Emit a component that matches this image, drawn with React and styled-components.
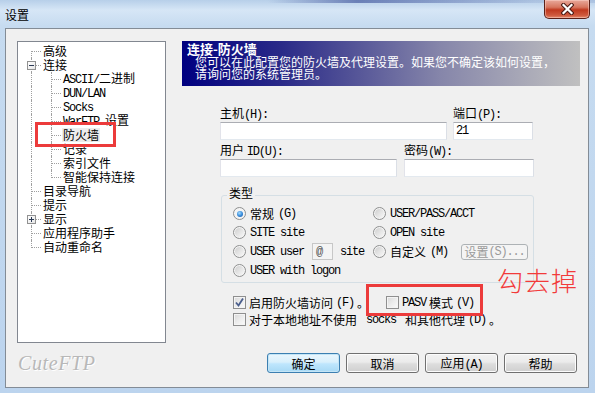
import React from "react";
import styled, { createGlobalStyle, css } from "styled-components";

const Global = createGlobalStyle`
  html, body { margin: 0; padding: 0; }
  body {
    width: 595px; height: 393px; overflow: hidden;
    font-family: "Noto Sans CJK SC", "Liberation Sans", sans-serif;
    font-size: 12px; color: #000;
  }
  * { box-sizing: border-box; }
`;

const L = styled.span`
  font-family: "Liberation Mono", "DejaVu Sans Mono", monospace;
  font-size: 12px;
  letter-spacing: -1.2px;
`;

const Win = styled.div`
  position: relative;
  width: 595px; height: 393px;
  display: flex; flex-direction: column;
  overflow: hidden;
  background:
    linear-gradient(90deg, rgba(40,60,140,0) 45%, rgba(40,60,140,0.55) 60%, rgba(40,60,140,0.1) 90%) top / 100% 3px no-repeat,
    linear-gradient(180deg, #b7cfe9 0px, #d6e6f6 10px, #c6dbf0 26px, #bcd4ee 100%);
`;

const TitleBar = styled.div`
  height: 28px; flex: none;
  display: flex; align-items: flex-start; justify-content: space-between;
`;

const Title = styled.div`
  padding: 7px 0 0 5px;
  font-size: 12px; line-height: 15px; color: #000;
`;

const CloseBtn = styled.div`
  width: 46px; height: 19px; margin-right: 5px;
  border: 1px solid #5a2018; border-top: none;
  border-radius: 0 0 5px 5px;
  background: linear-gradient(180deg, #e9a99b 0%, #d7765f 40%, #c0391f 55%, #cf5a3e 85%, #e58a6e 100%);
  box-shadow: inset 0 0 0 1px rgba(255,220,210,0.45);
  display: grid; place-items: center;
`;

const Client = styled.div`
  height: 360px; flex: none;
  margin: 0 6px 0 5px;
  border: 1px solid #838c96;
  background: #f0f0f0;
  padding: 12px 11px 0 11px;
  display: flex; flex-direction: column;
`;

const Main = styled.div`
  display: grid;
  grid-template-columns: 149px 398px;
  column-gap: 16px;
  height: 302px;
`;

const Tree = styled.div`
  border: 1px solid #828790;
  background: #fff;
  padding: 2px 0 0 3px;
`;

const Row = styled.div`
  height: 14px; display: flex; align-items: center;
  white-space: nowrap; line-height: 14px;
`;

const dot = "1px dotted #a0a0a0";
const Guide = styled.span`
  position: relative; flex: none;
  width: 20px; height: 14px;
  &::before {
    content: "";
    position: absolute; left: 10px;
    top: ${p => (p.$k === "first" ? "7px" : "0")};
    height: ${p => (p.$k === "first" ? "7px" : p.$k === "last" ? "8px" : p.$k === "blank" ? "0" : "14px")};
    border-left: ${p => (p.$k === "blank" ? "none" : dot)};
  }
  &::after {
    content: "";
    position: absolute; left: 11px; top: 7px; width: 9px;
    border-top: ${p => (p.$k === "pipe" || p.$k === "blank" ? "none" : dot)};
  }
`;

const Expander = styled.span`
  position: absolute; left: 6px; top: 3px; z-index: 1;
  width: 9px; height: 9px;
  border: 1px solid #919191;
  background: linear-gradient(135deg, #fff, #e6e6e6);
  display: grid; place-items: center;
`;

const Item = styled.span`
  margin-left: 1px; padding: 0 1px;
  background: ${p => (p.$sel ? "#ececec" : "transparent")};
`;

const Right = styled.div`
  display: flex; flex-direction: column;
`;

const Header = styled.div`
  height: 45px;
  background: linear-gradient(90deg, #000080 0%, #2a2a88 25%, #8686aa 65%, #c0c0c0 100%);
  color: #fff;
  padding: 0 5px;
`;

const HeadTitle = styled.div`
  font-size: 13px; font-weight: 700; line-height: 15px;
`;

const HeadDesc = styled.div`
  padding-left: 8px; line-height: 12px; font-size: 12px;
`;

const Form = styled.div`
  padding-left: 38px;
  display: flex; flex-direction: column;
`;

const FieldRow = styled.div`
  display: flex; gap: ${p => p.$gap}px;
  margin-top: ${p => p.$mt}px;
`;

const Field = styled.label`
  display: flex; flex-direction: column;
  width: ${p => p.$w}px;
  line-height: 14px;
`;

const Input = styled.input`
  height: 18px; width: 100%;
  border: 1px solid;
  border-color: #abadb3 #dbdfe6 #e3e9ef #e2e3ea;
  background: #fff;
  padding: 0 2px;
  font-family: "Liberation Mono", monospace; font-size: 12px; letter-spacing: -1.2px;
  outline: none;
`;

const Group = styled.fieldset`
  margin: 9px 0 0 1px;
  width: 313px;
  border: 1px solid #d5dfe5;
  border-radius: 3px;
  padding: 0 0 2px 11px;
`;

const Legend = styled.legend`
  margin-left: -6px;
  padding: 0 2px 4px;
  line-height: 14px; font-size: 12px;
`;

const RadioGrid = styled.div`
  display: grid;
  grid-template-columns: 140px 1fr;
  grid-auto-rows: 19px;
`;

const Opt = styled.label`
  display: flex; align-items: center; gap: 4px;
  white-space: nowrap; line-height: 14px;
`;

const Radio = styled.span`
  width: 13px; height: 13px; flex: none;
  border-radius: 50%;
  border: 1px solid #8e8f8f;
  background: #f4f4f4;
  display: grid; place-items: center;
  &::after {
    content: "";
    width: ${p => (p.$on ? "6px" : "9px")};
    height: ${p => (p.$on ? "6px" : "9px")};
    border-radius: 50%;
    background: ${p =>
      p.$on
        ? "radial-gradient(circle at 40% 35%, #a6dcff 0%, #3c8fdc 50%, #0e4fa3 100%)"
        : "linear-gradient(135deg, #cfcfcf 0%, #e4e4e4 50%, #f7f7f7 100%)"};
  }
`;

const SmallBox = styled.span`
  display: inline-flex; align-items: center;
  width: 21px; height: 17px;
  margin: 0 3px 0 4px;
  border: 1px solid #c7c7c7;
  background: #f4f4f4;
  padding-left: 3px;
  color: #555;
`;

const DisabledBtn = styled.span`
  display: inline-flex; align-items: center; justify-content: center;
  width: 67px; height: 16px; margin-left: 9px;
  border: 1px solid #adb2b5; border-radius: 3px;
  background: #f4f4f4;
  color: #9a9a9a;
`;

const Checks = styled.div`
  margin-top: 11px;
  padding-left: 13px;
  display: grid;
  grid-template-columns: 153px 1fr;
  grid-auto-rows: 17px;
`;

const CheckOpt = styled.label`
  display: flex; align-items: center; gap: 3px;
  white-space: nowrap; line-height: 14px;
  grid-column: ${p => (p.$span ? "1 / span 2" : "auto")};
`;

const Box = styled.span`
  width: 13px; height: 13px; flex: none;
  border: 1px solid #8f8f8f;
  background: linear-gradient(135deg, #d8d8d8 0%, #ececec 50%, #fbfbfb 100%);
  box-shadow: inset 0 0 0 1px #f4f4f4;
  display: grid; place-items: center;
`;

const Footer = styled.div`
  display: flex; align-items: center;
  margin-top: 10px;
`;

const Brand = styled.div`
  padding-left: 1px;
  font-family: "Liberation Serif", serif;
  font-style: italic;
  font-size: 20px; letter-spacing: 0.6px;
  color: #b8b8b8;
  text-shadow: 1px 1px 0 #fff;
  line-height: 20px;
`;

const Buttons = styled.div`
  margin-left: auto;
  display: flex; gap: 6px;
`;

const Btn = styled.button`
  width: 73px; height: 20px; padding: 0;
  border-radius: 3px;
  font-family: "Noto Sans CJK SC", sans-serif; font-size: 12px; color: #000;
  ${p =>
    p.$focus
      ? css`
          border: 1px solid #3c7fb1;
          background: linear-gradient(180deg, #eaf6fd 0%, #d9f0fc 45%, #bee6fd 55%, #a7d9f5 100%);
          box-shadow: inset 0 0 0 1px #c4e5f6;
        `
      : css`
          border: 1px solid #707070;
          background: linear-gradient(180deg, #f2f2f2 0%, #ebebeb 45%, #dddddd 55%, #cfcfcf 100%);
          box-shadow: inset 0 0 0 1px #fcfcfc;
        `}
`;

const Mark = styled.div`
  position: absolute;
  left: ${p => p.$x}px; top: ${p => p.$y}px;
  width: ${p => p.$w}px; height: ${p => p.$h}px;
  border: 3px solid #ec3b3b;
  pointer-events: none;
`;

const Note = styled.div`
  position: absolute; left: 497px; top: 264px;
  font-family: "Noto Sans CJK SC", sans-serif;
  font-weight: 300;
  font-size: 26px; line-height: 32px;
  color: #f23a3a;
  letter-spacing: 1px;
`;

const Minus = () => (
  <svg width="7" height="7" viewBox="0 0 7 7"><rect x="1" y="3" width="5" height="1" fill="#2b3a55" /></svg>
);
const Plus = () => (
  <svg width="7" height="7" viewBox="0 0 7 7">
    <rect x="1" y="3" width="5" height="1" fill="#2b3a55" />
    <rect x="3" y="1" width="1" height="5" fill="#2b3a55" />
  </svg>
);

const Check = () => (
  <svg width="11" height="11" viewBox="0 0 11 11">
    <path d="M2 5.5 L4.5 8.5 L9 1.5" fill="none" stroke="#4a5e8c" strokeWidth="1.8" />
  </svg>
);

const tree = [
  { g: ["first"], t: "高级" },
  { g: ["tee"], t: "连接", exp: "minus" },
  { g: ["pipe", "tee"], t: <><L>ASCII/</L>二进制</> },
  { g: ["pipe", "tee"], t: <L>DUN/LAN</L> },
  { g: ["pipe", "tee"], t: <L>Socks</L> },
  { g: ["pipe", "tee"], t: <><L>WarFTP </L>设置</> },
  { g: ["pipe", "tee"], t: "防火墙", sel: true },
  { g: ["pipe", "tee"], t: "记录" },
  { g: ["pipe", "tee"], t: "索引文件" },
  { g: ["pipe", "last"], t: "智能保持连接" },
  { g: ["tee"], t: "目录导航" },
  { g: ["tee"], t: "提示" },
  { g: ["tee"], t: "显示", exp: "plus" },
  { g: ["tee"], t: "应用程序助手" },
  { g: ["last"], t: "自动重命名" },
];

export default function App() {
  return (
    <>
      <Global />
      <Win>
        <TitleBar>
          <Title>设置</Title>
          <CloseBtn>
            <svg width="13" height="12" viewBox="0 0 13 12">
              <path d="M2.5 2 L10.5 10 M10.5 2 L2.5 10" stroke="#4a1a14" strokeWidth="4.2" strokeLinecap="square" />
              <path d="M2.5 2 L10.5 10 M10.5 2 L2.5 10" stroke="#fff" strokeWidth="2.2" strokeLinecap="square" />
            </svg>
          </CloseBtn>
        </TitleBar>
        <Client>
          <Main>
            <Tree>
              {tree.map((r, i) => (
                <Row key={i}>
                  {r.g.map((k, j) => (
                    <Guide key={j} $k={k}>
                      {j === 0 && r.exp && <Expander>{r.exp === "minus" ? <Minus /> : <Plus />}</Expander>}
                    </Guide>
                  ))}
                  <Item $sel={r.sel}>{r.t}</Item>
                </Row>
              ))}
            </Tree>
            <Right>
              <Header>
                <HeadTitle>连接-防火墙</HeadTitle>
                <HeadDesc>
                  您可以在此配置您的防火墙及代理设置。如果您不确定该如何设置，
                  <br />
                  请询问您的系统管理员。
                </HeadDesc>
              </Header>
              <Form>
                <FieldRow $gap={6} $mt={20}>
                  <Field $w={227}>
                    <span>主机<L>(H):</L></span>
                    <Input defaultValue="" />
                  </Field>
                  <Field $w={80}>
                    <span>端口<L>(P):</L></span>
                    <Input defaultValue="21" />
                  </Field>
                </FieldRow>
                <FieldRow $gap={7} $mt={3}>
                  <Field $w={177}>
                    <span>用户 <L>ID(U):</L></span>
                    <Input defaultValue="" />
                  </Field>
                  <Field $w={130}>
                    <span>密码<L>(W):</L></span>
                    <Input type="text" defaultValue="" />
                  </Field>
                </FieldRow>
                <Group>
                  <Legend>类型</Legend>
                  <RadioGrid>
                    <Opt><Radio $on />常规<L>(G)</L></Opt>
                    <Opt><Radio /><L>USER/PASS/ACCT</L></Opt>
                    <Opt><Radio /><L>SITE site</L></Opt>
                    <Opt><Radio /><L>OPEN site</L></Opt>
                    <Opt><Radio /><L>USER user</L><SmallBox><L>@</L></SmallBox><L>site</L></Opt>
                    <Opt><Radio />自定义<L>(M)</L><DisabledBtn>设置<L>(S)...</L></DisabledBtn></Opt>
                    <Opt><Radio /><L>USER with logon</L></Opt>
                  </RadioGrid>
                </Group>
                <Checks>
                  <CheckOpt><Box><Check /></Box>启用防火墙访问<L>(F)</L>。</CheckOpt>
                  <CheckOpt><Box /><L>PASV </L>模式<L>(V)</L></CheckOpt>
                  <CheckOpt $span><Box />对于本地地址不使用<L>&nbsp;socks&nbsp;</L>和其他代理<L>(D)</L>。</CheckOpt>
                </Checks>
              </Form>
            </Right>
          </Main>
          <Footer>
            <Brand>CuteFTP</Brand>
            <Buttons>
              <Btn $focus>确定</Btn>
              <Btn>取消</Btn>
              <Btn>应用<L>(A)</L></Btn>
              <Btn>帮助</Btn>
            </Buttons>
          </Footer>
        </Client>
        <Mark $x={35} $y={122} $w={81} $h={25} />
        <Mark $x={366} $y={284} $w={117} $h={32} />
        <Note>勾去掉</Note>
      </Win>
    </>
  );
}
